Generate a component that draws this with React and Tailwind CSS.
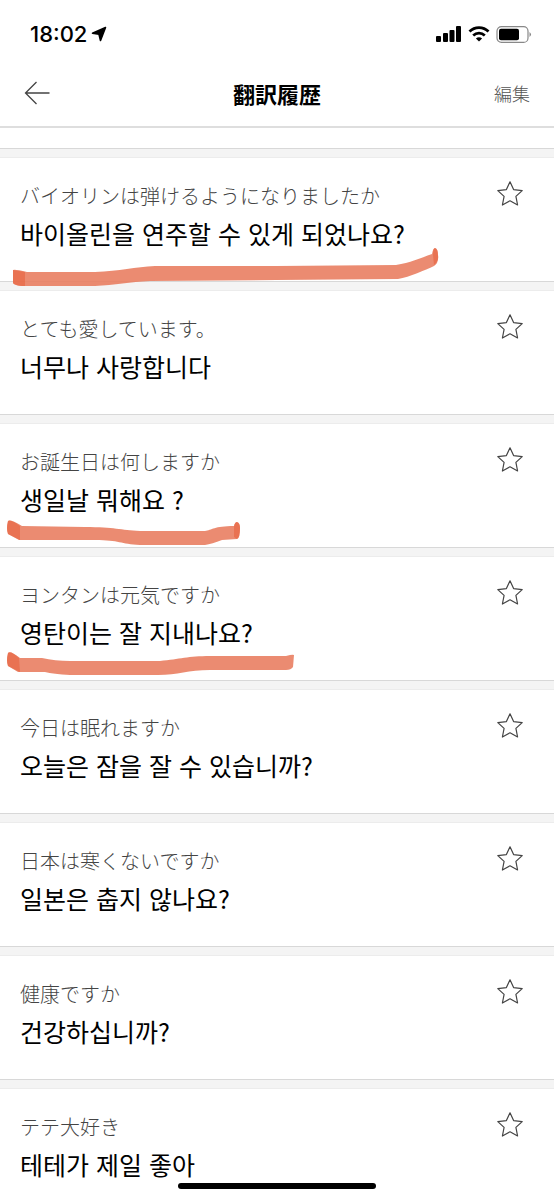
import React, { useState } from 'react'

const HISTORY = [
  {
    id: 1,
    source: 'バイオリンは弾けるようになりましたか',
    target: '바이올린을 연주할 수 있게 되었나요?',
    mark: 'M13 112 Q15 111 27 114 L95 114 C120 113 135 109 155 108 L277 108 L396 107 C410 105 420 100 432 96 Q433 90 435 90 Q438 91 438 97 Q439 105 434 108 C425 112 410 119 398 121 L277 122 L150 123 C130 124 115 127 95 128 L22 128 Q14 127 13 125 Z',
    ends: ['M13 112 L25 114 L25 128 L20 128 Q14 127 13 125 Z', 'M433 97 Q433 90 435 90 Q438 91 438 97 Q439 103 434 107 Z'],
  },
  { id: 2, source: 'とても愛しています。', target: '너무나 사랑합니다' },
  {
    id: 3,
    source: 'お誕生日は何しますか',
    target: '생일날 뭐해요 ?',
    mark: 'M8 97 Q10 95 22 102 L85 103 C115 103 120 106 140 107 L205 107 C212 106 214 102 234 102 Q235 98 237 98 Q240 99 240 104 Q240 114 237 115 L222 116 Q212 120 205 121 L140 121 C120 120 120 116 95 116 L19 116 L8 110 Q6 105 8 97 Z',
    ends: ['M8 97 Q10 95 20 102 L20 116 L8 110 Q6 105 8 97 Z', 'M234 102 Q235 98 237 98 Q240 99 240 104 Q240 114 237 115 L234 113 Z'],
  },
  {
    id: 4,
    source: 'ヨンタンは元気ですか',
    target: '영탄이는 잘 지내나요?',
    mark: 'M8 96 Q10 93 20 101 L42 101 Q55 104 70 104 L160 104 C180 102 188 99 210 99 L286 99 Q293 97 294 98 L293 110 Q291 113 286 113 L210 113 C188 113 178 118 158 118 L70 118 Q53 117 45 115 L18 115 L8 109 Q6 104 8 96 Z',
    ends: ['M8 96 Q10 93 19 101 L20 115 L8 109 Q6 104 8 96 Z'],
  },
  { id: 5, source: '今日は眠れますか', target: '오늘은 잠을 잘 수 있습니까?' },
  { id: 6, source: '日本は寒くないですか', target: '일본은 춥지 않나요?' },
  { id: 7, source: '健康ですか', target: '건강하십니까?' },
  { id: 8, source: 'テテ大好き', target: '테테가 제일 좋아' },
]

const StatusBar = () => (
  <div className="flex h-16 items-center justify-between pl-[30px] pr-[22px] pt-1">
    <div className="flex items-center gap-1">
      <span className="font-['Inter',sans-serif] text-[22px] leading-7 font-medium">18:02</span>
      <svg width="16" height="16" viewBox="0 0 16 16" aria-hidden="true">
        <path d="M14.5 1.5 L1.5 7.2 L8 8.2 L9.5 14.5 Z" fill="#000" stroke="#000" strokeWidth="1.6" strokeLinejoin="round" />
      </svg>
    </div>
    <div className="flex items-center gap-[6px]">
      <svg width="26" height="16" viewBox="0 0 26 16" aria-hidden="true">
        <rect x="0" y="10" width="5" height="6" rx="1" />
        <rect x="7" y="7" width="5" height="9" rx="1" />
        <rect x="13.5" y="4" width="5" height="12" rx="1" />
        <rect x="20" y="0" width="5" height="16" rx="1" />
      </svg>
      <svg width="22" height="16" viewBox="0 0 22 16" fill="none" stroke="#000" strokeWidth="2.8" aria-hidden="true">
        <path d="M1.5 5.6 C6.8 0.4 15.2 0.4 20.5 5.6" />
        <path d="M5.2 9.5 C8.6 6.4 13.4 6.4 16.8 9.5" />
        <path d="M11 15.6 L7.9 12.5 C9.7 10.9 12.3 10.9 14.1 12.5 Z" fill="#000" stroke="none" />
      </svg>
      <svg width="36" height="17" viewBox="0 0 36 17" aria-hidden="true">
        <rect x="1" y="0.6" width="31" height="15.8" rx="4.5" fill="none" stroke="#888" strokeWidth="1.2" />
        <rect x="3" y="2.8" width="20" height="11.4" rx="2" />
        <path d="M33.5 6 Q36.5 8.5 33.5 11 Z" fill="#888" />
      </svg>
    </div>
  </div>
)

const Divider = () => (
  <div className="h-[10px] border-t border-b border-t-[#d8d8d8] border-b-[#ececec] bg-[#f4f4f4]" />
)

const HistoryItem = ({ item }) => {
  const [starred, setStarred] = useState(false)

  return (
    <li>
      <div className="relative flex items-start justify-between pl-5 pr-[30px] pt-[23px] pb-[26px]">
        <div>
          <p lang="ja" className="text-xl leading-[30px] font-light text-[#444] font-['Noto_Sans_CJK_JP',sans-serif]">
            {item.source}
          </p>
          <p lang="ko" className="text-[25px] leading-[44px] text-black font-['Noto_Sans_CJK_KR',sans-serif]">
            {item.target}
          </p>
        </div>
        <button type="button" aria-label="お気に入り" aria-pressed={starred} onClick={() => setStarred(!starred)}>
          <svg width="28" height="26" viewBox="0 0 28 26" fill={starred ? '#444' : 'none'} stroke="#444" strokeWidth="1.2" strokeLinejoin="round">
            <path d="M14 0.8 L17.6 8.6 L26.2 9.6 L19.9 15.4 L21.6 24 L14 19.8 L6.4 24 L8.1 15.4 L1.8 9.6 L10.4 8.6 Z" />
          </svg>
        </button>
        {item.mark && (
          <svg className="pointer-events-none absolute left-0 top-0 z-10" width="460" height="133" viewBox="0 0 460 133" aria-hidden="true">
            <path d={item.mark} fill="#e97e62" fillOpacity="0.9" />
            {item.ends.map((d) => (
              <path key={d} d={d} fill="#e8623e" fillOpacity="0.6" />
            ))}
          </svg>
        )}
      </div>
      <Divider />
    </li>
  )
}

const App = () => {
  return (
    <div className="relative flex h-screen flex-col overflow-hidden bg-white text-black">
      <StatusBar />
      <header className="grid grid-cols-3 items-center border-b-2 border-[#dedede] px-6 pt-[11px] pb-[15px] font-['Noto_Sans_CJK_JP',sans-serif]">
        <button type="button" aria-label="戻る" className="justify-self-start">
          <svg width="26" height="24" viewBox="0 0 26 24" fill="none" stroke="#444" strokeWidth="1.3">
            <path d="M25.5 12 H2 M12.5 1 L1.5 12 L12.5 23" />
          </svg>
        </button>
        <h1 lang="ja" className="justify-self-center text-[22px] leading-9 font-bold">翻訳履歴</h1>
        <button type="button" lang="ja" className="justify-self-end text-lg font-light text-[#555]">編集</button>
      </header>
      <main className="min-h-0 flex-1 overflow-y-auto pt-5 [scrollbar-width:none]">
        <Divider />
        <ul>
          {HISTORY.map((item) => (
            <HistoryItem key={item.id} item={item} />
          ))}
        </ul>
      </main>
      <div className="absolute bottom-[11px] left-1/2 z-20 h-[6px] w-[198px] -translate-x-1/2 rounded-full bg-black" />
    </div>
  )
}

export default App
